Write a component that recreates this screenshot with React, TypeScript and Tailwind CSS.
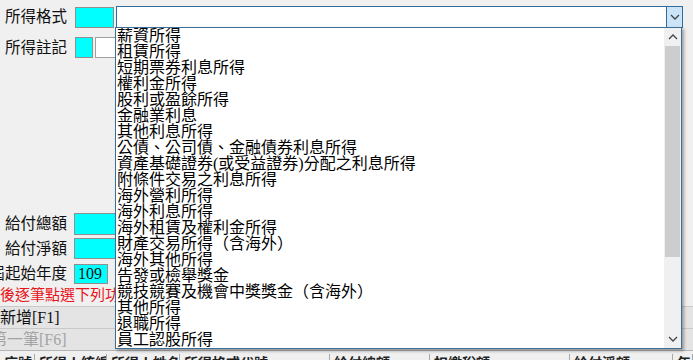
import React from "react";

const incomeTypes = [
  "薪資所得",
  "租賃所得",
  "短期票券利息所得",
  "權利金所得",
  "股利或盈餘所得",
  "金融業利息",
  "其他利息所得",
  "公債、公司債、金融債券利息所得",
  "資產基礎證券(或受益證券)分配之利息所得",
  "附條件交易之利息所得",
  "海外營利所得",
  "海外利息所得",
  "海外租賃及權利金所得",
  "財產交易所得（含海外）",
  "海外其他所得",
  "告發或檢舉獎金",
  "競技競賽及機會中獎獎金（含海外）",
  "其他所得",
  "退職所得",
  "員工認股所得",
];

const headerCells = [
  { w: "w-[35px]", t: "序號" },
  { w: "w-[72px]", t: "所得人統編" },
  { w: "w-[73px]", t: "所得人姓名" },
  { w: "w-[150px]", t: "所得格式代號" },
  { w: "w-[100px]", t: "給付總額" },
  { w: "w-[140px]", t: "扣繳稅額" },
  { w: "w-[103px]", t: "給付淨額" },
  { w: "w-[20px]", t: "年" },
];

function Label({ children }: { children: React.ReactNode }) {
  return (
    <div className="w-[67px] shrink-0 flex justify-end whitespace-nowrap text-[15.5px] leading-none text-[#111]">
      {children}
    </div>
  );
}

function CyanBox({ className, children }: { className: string; children?: React.ReactNode }) {
  return (
    <div
      className={`shrink-0 bg-[#00ffff] border border-[#8f8f8f] flex items-center pl-[3px] text-[16px] leading-none font-['Liberation_Serif'] text-[#111] ${className}`}
    >
      {children}
    </div>
  );
}

function Chevron({ up = false }: { up?: boolean }) {
  return (
    <svg width="10" height="6" viewBox="0 0 10 6" className={up ? "rotate-180" : ""}>
      <path d="M1 1 L5 5 L9 1" fill="none" stroke="#444" strokeWidth="1.3" />
    </svg>
  );
}

export default function App() {
  return (
    <div className="relative w-[693px] h-[360px] overflow-hidden bg-[#f0f0f0] font-['Liberation_Serif','Noto_Sans_CJK_TC',serif] text-[#111]">
      <div className="flex flex-col pt-[6px]">
        {/* 所得格式 */}
        <div className="flex items-center h-[22px]">
          <Label>所得格式</Label>
          <CyanBox className="ml-[8px] w-[39px] h-[21px]" />
          <div className="ml-[2px] w-[567px] h-[22px] flex bg-white border border-[#2e6d9e]">
            <div className="flex-1" />
            <div className="w-[16px] h-full bg-[#cce4f7] border-l border-[#2e6d9e] flex items-center justify-center">
              <Chevron />
            </div>
          </div>
        </div>

        {/* 所得註記 */}
        <div className="flex items-center h-[21px] mt-[9px]">
          <Label>所得註記</Label>
          <CyanBox className="ml-[8px] w-[18px] h-[21px]" />
          <div className="ml-[2px] w-[22px] h-[21px] bg-white border border-[#a0a0a0]" />
        </div>

        {/* 給付總額 */}
        <div className="flex items-center h-[22px] mt-[155px]">
          <Label>給付總額</Label>
          <CyanBox className="ml-[7px] w-[42px] h-[22px]" />
        </div>

        {/* 給付淨額 */}
        <div className="flex items-center h-[21px] mt-[3px]">
          <Label>給付淨額</Label>
          <CyanBox className="ml-[7px] w-[42px] h-[21px]" />
        </div>

        {/* 起始年度 */}
        <div className="flex items-center h-[20px] mt-[5px]">
          <Label>屆起始年度</Label>
          <CyanBox className="ml-[7px] w-[34px] h-[20px]">109</CyanBox>
        </div>

        <div className="h-[22px] flex items-center whitespace-nowrap text-[15px] leading-none text-[#e8141b]">
          後逐筆點選下列功能
        </div>

        {/* buttons */}
        <div className="h-[23px] flex items-center bg-[#e4e4e4] border-y border-[#c9c9c9] whitespace-nowrap text-[16px] leading-none">
          <span>新增[F1]</span>
        </div>
        <div className="h-[22px] flex items-center bg-[#e4e4e4] border-b border-[#b5b5b5] whitespace-nowrap text-[16px] leading-none text-[#a3a3a3]">
          <span className="-ml-[9px]">第一筆[F6]</span>
        </div>

        {/* grid header, mostly off screen */}
        <div className="flex h-[20px] pt-[3px] text-[14px] font-bold leading-[16px] text-[#222] font-['Noto_Sans_CJK_TC',sans-serif]">
          {headerCells.map((c, i) => (
            <div key={i} className={`${c.w} shrink-0 border-r border-[#a8a8a8] pl-[4px] overflow-hidden whitespace-nowrap`}>
              {c.t}
            </div>
          ))}
        </div>
      </div>

      {/* open dropdown list */}
      <div className="absolute left-[115px] top-[27px] w-[567px] h-[322px] flex bg-white border border-[#3d6e96] shadow-[2px_2px_3px_rgba(0,0,0,0.35)]">
        <ul className="flex-1 overflow-hidden">
          {incomeTypes.map((t) => (
            <li key={t} className="h-[16px] pl-[1px] whitespace-nowrap text-[16px] leading-[16px] text-black">
              {t}
            </li>
          ))}
        </ul>
        <div className="w-[17px] h-full bg-[#f0f0f0] flex flex-col">
          <div className="h-[18px] flex items-center justify-center">
            <Chevron up />
          </div>
          <div className="h-[211px] mx-[1px] bg-[#cdcdcd]" />
          <div className="flex-1" />
          <div className="h-[18px] flex items-center justify-center">
            <Chevron />
          </div>
        </div>
      </div>
    </div>
  );
}
